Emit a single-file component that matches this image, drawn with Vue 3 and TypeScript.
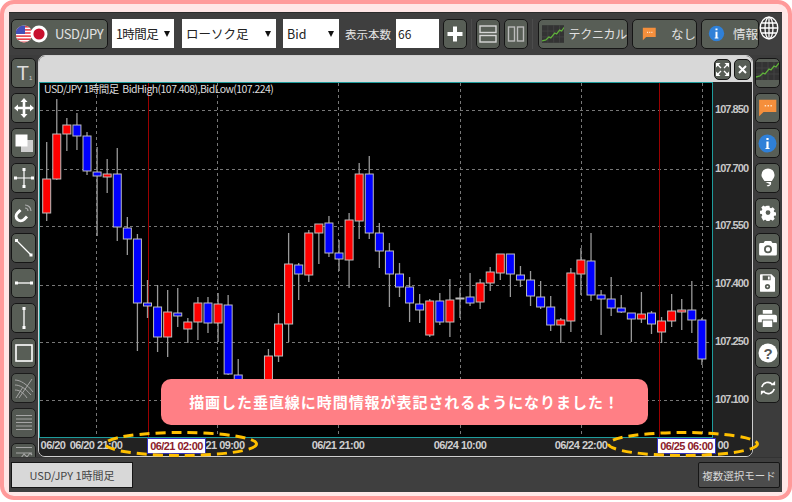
<script setup lang="ts">
type Candle = [number, number, number, number, 'r' | 'b']
// body top, body bottom, wick top, wick bottom, colour
const raw: Candle[] = [
  [179,213,142,221,'r'],[134,179,99,180,'r'],[125,134,118,151,'r'],[125,136,113,150,'b'],[136,171,132,175,'b'],
  [172,176,147,236,'b'],[174,177,159,193,'r'],[174,227,148,241,'b'],[228,239,217,255,'b'],[239,303,234,351,'b'],
  [303,306,280,318,'b'],[307,337,285,352,'b'],[312,337,290,357,'r'],[313,316,288,327,'b'],[322,329,318,343,'r'],
  [303,322,297,340,'r'],[303,323,297,333,'b'],[304,323,293,342,'r'],[305,374,295,375,'b'],[375,395,359,395,'b'],
  [395,396,390,396,'b'],[395,396,390,396,'r'],[356,396,349,396,'r'],[324,356,313,362,'r'],[264,324,233,342,'r'],
  [265,274,263,300,'b'],[233,275,230,282,'r'],[224,233,224,264,'r'],[223,253,216,257,'b'],[253,259,240,271,'b'],
  [220,260,213,288,'r'],[174,221,163,239,'r'],[174,233,156,239,'b'],[233,251,223,268,'b'],[251,274,243,307,'b'],
  [274,287,263,297,'b'],[287,303,277,322,'b'],[304,310,294,323,'b'],[301,335,299,337,'r'],[301,322,293,325,'b'],
  [300,322,279,337,'r'],[298,299,288,318,'r'],[297,303,273,306,'b'],[283,302,279,309,'r'],[272,283,267,291,'r'],
  [254,273,254,280,'r'],[254,274,254,297,'b'],[275,280,266,287,'b'],[280,296,271,306,'b'],[297,307,281,309,'b'],
  [307,325,296,331,'b'],[320,325,318,343,'r'],[273,321,268,332,'r'],[260,274,248,295,'r'],[261,295,233,301,'b'],
  [295,299,290,335,'b'],[299,308,277,316,'b'],[308,312,295,313,'b'],[313,319,313,342,'b'],[314,319,292,323,'r'],
  [313,324,311,334,'b'],[321,332,317,343,'r'],[311,321,294,327,'r'],[310,312,299,330,'r'],[310,320,281,333,'b'],
  [320,359,318,365,'b'],
]
const candles = raw.map((c, i) => ({
  x: 46.7 + i * 10.08,
  top: c[0],
  bottom: c[1],
  wickTop: c[2],
  wickBottom: c[3],
  fill: c[4] === 'r' ? '#ff0000' : '#0000ff',
}))
const gridY = [110.5, 169.5, 226.5, 285.5, 342.5, 400.5]
const gridX = [96.5, 217.5, 338.5, 460.5, 581.5, 702.5]
const redX = [148.5, 659.5]
const prices = [
  { t: '107.850', y: 110 }, { t: '107.700', y: 169 }, { t: '107.550', y: 226 },
  { t: '107.400', y: 284 }, { t: '107.250', y: 342 }, { t: '107.100', y: 400 },
]
const times = [
  { t: '06/20', x: 53 }, { t: '06/20 21:00', x: 96 }, { t: '21 09:00', x: 225 },
  { t: '06/21 21:00', x: 338 }, { t: '06/24 10:00', x: 460 }, { t: '06/24 22:00', x: 581 }, { t: '00', x: 723 },
]
const flagStripes = [0, 1, 2, 3, 4, 5]
</script>

<template>
  <div class="frame">
    <div class="app">
      <header class="toolbar">
        <button class="btn pair">
          <svg width="32" height="22" viewBox="0 0 32 22">
            <defs><clipPath id="usc"><circle cx="8" cy="11" r="8.5" /></clipPath></defs>
            <g clip-path="url(#usc)">
              <rect x="-1" y="0" width="19" height="22" fill="#fff" />
              <rect v-for="s in flagStripes" :key="s" x="-1" :y="3 + s * 3.1" width="19" height="1.6" fill="#e8404a" />
              <rect x="-1" y="0" width="10" height="11" fill="#4450b8" />
            </g>
            <circle cx="23" cy="11" r="8.5" fill="#fff" />
            <circle cx="23" cy="11" r="5.6" fill="#c8102e" />
          </svg>
          <span class="pair-text">USD/JPY</span>
        </button>
        <div class="select s1"><span>1時間足</span><i class="caret"></i></div>
        <div class="select s2"><span>ローソク足</span><i class="caret"></i></div>
        <div class="select s3"><span>Bid</span><i class="caret"></i></div>
        <span class="count-label">表示本数</span>
        <div class="count">66</div>
        <button class="btn square">
          <svg width="18" height="18" viewBox="0 0 18 18"><path d="M7 1.5h4v5.500h5.500v4H11v5.500H7V11H1.500V7H7z" fill="#fff" /></svg>
        </button>
        <i class="sep"></i>
        <button class="btn square">
          <svg width="18" height="20" viewBox="0 0 18 20" fill="none" stroke="#d6d6d6" stroke-width="1.400"><rect x="1" y="2" width="16" height="6.500" /><rect x="1" y="11.500" width="16" height="6.500" /></svg>
        </button>
        <button class="btn square">
          <svg width="18" height="20" viewBox="0 0 18 20" fill="none" stroke="#bbb" stroke-width="1.400"><rect x="1.500" y="3" width="6" height="14" /><rect x="10.500" y="3" width="6" height="14" /></svg>
        </button>
        <i class="sep"></i>
        <button class="btn tech">
          <svg width="23" height="18" viewBox="0 0 23 18">
            <rect width="23" height="18" fill="#333" />
            <path d="M0 6H23M0 12H23M6 0V18M12 0V18M18 0V18" stroke="#484848" stroke-width=".7" />
            <path d="M0 16l4-1 3-3 2 1 4-5 2 1 3-4 2 1 3-4" fill="none" stroke="#5fb03a" stroke-width="1.300" />
          </svg>
          <span>テクニカル</span>
        </button>
        <button class="btn none">
          <svg width="18" height="18" viewBox="0 0 18 18"><path d="M1 1.500h15.500v11H5L1 16.500z" fill="#f58f3c" /><path d="M6 7h1.300M8.600 7h1.300M11.200 7h1.300" stroke="#ffe4c8" stroke-width="1.300" /></svg>
          <span>なし</span>
        </button>
        <button class="btn info">
          <svg width="21" height="21" viewBox="0 0 21 21"><circle cx="10.500" cy="10.500" r="8.500" fill="#2f80d8" /><path d="M9.400 5h2.200v2h-2.200zM9.400 8.500h2.200V15h1v1H8.500v-1h.9z" fill="#fff" /></svg>
          <span>情報</span>
        </button>
        <svg class="globe" width="20" height="24" viewBox="0 0 20 24" fill="none" stroke="#fff" stroke-width="1.300">
          <ellipse cx="10" cy="12" rx="8.800" ry="10.800" fill="#3a3a3a" />
          <ellipse cx="10" cy="12" rx="4" ry="10.800" />
          <path d="M10 1.200V22.800M1.200 12H18.800M2.300 7H17.700M2.300 17H17.700" />
        </svg>
      </header>

      <div class="middle">
        <aside class="tools">
          <button class="btn tool"><span class="t-big">T</span><span class="t-sub">1</span></button>
          <button class="btn tool">
            <svg width="20" height="20" viewBox="0 0 20 20"><path d="M10 0l3.500 4H11.300v4.700H16V6.500L20 10l-4 3.500V11.300H11.300V16h2.200L10 20l-3.500-4h2.200V11.300H4v2.200L0 10l4-3.500v2.200h4.700V4H6.500z" fill="#fff" /></svg>
          </button>
          <button class="btn tool">
            <svg width="20" height="20" viewBox="0 0 20 20"><rect x="7" y="7" width="12" height="12" fill="#cfcfcf" /><rect x="1.500" y="1.500" width="12" height="12" fill="#fff" /></svg>
          </button>
          <button class="btn tool">
            <svg width="20" height="20" viewBox="0 0 20 20"><path d="M10 1V19M1 10H19" stroke="#fff" stroke-width="1.200" /><path d="M8.500 0h3v3h-3zM8.500 17h3v3h-3zM0 8.500h3v3H0zM17 8.500h3v3h-3z" fill="#fff" /></svg>
          </button>
          <button class="btn tool">
            <svg width="20" height="20" viewBox="0 0 20 20" fill="none">
              <path d="M7 6l-3 3a4.500 4.500 0 0 0 6.500 6.500l3-3" stroke="#fff" stroke-width="3" transform="translate(-.5 1)" />
              <path d="M11 2a6 6 0 0 1 6 6M11 5a3 3 0 0 1 3 3" stroke="#aaa" stroke-width="1.200" />
            </svg>
          </button>
          <button class="btn tool">
            <svg width="20" height="20" viewBox="0 0 20 20"><path d="M3 3L17 17" stroke="#fff" stroke-width="1.300" /><path d="M1 1h3v3H1zM15.500 15.500h3v3h-3z" fill="#fff" /></svg>
          </button>
          <button class="btn tool">
            <svg width="20" height="20" viewBox="0 0 20 20"><path d="M2 10H18" stroke="#fff" stroke-width="1.300" /><path d="M1 8.500h3v3H1zM16 8.500h3v3h-3z" fill="#fff" /></svg>
          </button>
          <button class="btn tool">
            <svg width="20" height="24" viewBox="0 0 20 24"><path d="M10 2V22" stroke="#fff" stroke-width="1.300" /><path d="M8.500 1h3v3h-3zM8.500 20h3v3h-3z" fill="#fff" /></svg>
          </button>
          <button class="btn tool">
            <svg width="18" height="18" viewBox="0 0 18 18" fill="none"><rect x="1" y="1" width="16" height="16" stroke="#fff" stroke-width="1.600" /></svg>
          </button>
          <button class="btn tool dim">
            <svg width="20" height="22" viewBox="0 0 20 22" fill="none" stroke="#b8b8b8" stroke-width="1"><path d="M1 3c5 0 12 4 18 12M1 8c5 0 10 3 16 10M1 13c4 0 8 2 12 8M5 21L18 2M2 21L9 10" /></svg>
          </button>
          <button class="btn tool dim">
            <svg width="20" height="20" viewBox="0 0 20 20"><path d="M2 2.500H18M2 6H18M2 9.500H18M2 13H18M2 16.500H18" stroke="#b8b8b8" stroke-width="1.100" /></svg>
          </button>
          <button class="btn tool dim top">
            <svg width="20" height="14" viewBox="0 0 20 14" fill="none" stroke="#b8b8b8" stroke-width="1.100"><path d="M2 1.500H18M2 7H18M2 12H7l3-4 3 3 3-4 2 2" /></svg>
          </button>
        </aside>

        <section class="window">
          <div class="titlebar">
            <button class="btn mini">
              <svg width="13" height="13" viewBox="0 0 13 13"><path d="M0 0h4.500L0 4.500zM13 0v4.500L8.500 0zM0 13V8.500L4.500 13zM13 13H8.500L13 8.500z" fill="#fff" /><path d="M2 2l3 3M11 2L8 5M2 11l3-3M11 11L8 8" stroke="#fff" stroke-width="1.300" /></svg>
            </button>
            <button class="btn mini">
              <svg width="9" height="9" viewBox="0 0 9 9"><path d="M1 1L8 8M8 1L1 8" stroke="#fff" stroke-width="2" /></svg>
            </button>
          </div>
          <div class="chart-row">
            <div class="plot">
              <svg class="plot-svg" width="672" height="354" viewBox="40 83 672 354">
                <g stroke="#777" stroke-width="1" stroke-dasharray="3 3">
                  <line v-for="y in gridY" :key="'h' + y" x1="40" x2="712" :y1="y" :y2="y" />
                  <line v-for="x in gridX" :key="'v' + x" :x1="x" :x2="x" y1="83" y2="437" />
                </g>
                <line v-for="x in redX" :key="'r' + x" :x1="x" :x2="x" y1="83" y2="437" stroke="#9a0000" stroke-width="1" />
                <g v-for="(c, i) in candles" :key="i">
                  <line :x1="c.x" :x2="c.x" :y1="c.wickTop" :y2="c.wickBottom" stroke="#999" stroke-width="1.300" />
                  <rect :x="c.x - 4" :y="c.top" width="8" :height="c.bottom - c.top" :fill="c.fill" stroke="#bdbdbd" stroke-width="1" />
                </g>
              </svg>
              <div class="chart-title">USD/JPY 1時間足&nbsp; BidHigh(107.408),BidLow(107.224)</div>
            </div>
            <div class="price-axis">
              <span v-for="p in prices" :key="p.t" class="price" :style="{ top: p.y - 83 + 'px' }">{{ p.t }}</span>
            </div>
          </div>
          <div class="time-axis">
            <span v-for="t in times" :key="t.t" class="time" :style="{ left: t.x - 39 + 'px' }">{{ t.t }}</span>
            <span class="stamp s-left">06/21 02:00</span>
            <span class="stamp s-right">06/25 06:00</span>
          </div>
        </section>

        <aside class="tools right">
          <button class="btn tool">
            <svg width="23" height="22" viewBox="0 0 23 22">
              <rect width="23" height="18" fill="#333" />
              <path d="M0 6H23M0 12H23M6 0V18M12 0V18M18 0V18" stroke="#484848" stroke-width=".7" />
              <path d="M0 15l4-1 3-3 2 1 4-5 2 1 3-4 2 1 3-4" fill="none" stroke="#5fb03a" stroke-width="1.300" />
            </svg>
          </button>
          <button class="btn tool">
            <svg width="20" height="20" viewBox="0 0 18 18"><path d="M1 1.500h15.500v11H5L1 16.500z" fill="#f58f3c" /><path d="M6 7h1.300M8.600 7h1.300M11.200 7h1.300" stroke="#ffe4c8" stroke-width="1.300" /></svg>
          </button>
          <button class="btn tool">
            <svg width="21" height="21" viewBox="0 0 21 21"><circle cx="10.500" cy="10.500" r="9" fill="#2f80d8" /><path d="M9.400 5h2.200v2h-2.200zM9.400 8.500h2.200V15h1v1H8.500v-1h.9z" fill="#fff" /></svg>
          </button>
          <button class="btn tool">
            <svg width="14" height="22" viewBox="0 0 16 22"><path d="M8 0a7.500 7.500 0 0 1 7.500 7.500c0 3-2 4.500-3 7H4c-1-2.500-3.500-4-3.500-7A7.500 7.500 0 0 1 8 0z" fill="#fff" /><path d="M5 15.500h6.500v2.500c-1 2-4 3.500-5 1.500l4-1.500" fill="#fff" /></svg>
          </button>
          <button class="btn tool">
            <svg width="16" height="16" viewBox="-1 -1 20 20">
              <path fill="#fff" fill-rule="evenodd" d="M7.200 0h3.600l.5 2.400 1.500.7 2.100-1.300 2.500 2.500-1.300 2.100.7 1.500 2.200.5v3.600l-2.300.5-.6 1.500 1.300 2.100-2.500 2.500-2.100-1.300-1.500.6-.5 2.400H7.200l-.5-2.400-1.500-.6-2.100 1.300L.6 14l1.300-2.100-.6-1.500L-1 9.900V6.300l2.300-.5.600-1.500L.6 2.200 3.100-.3l2.100 1.300 1.500-.6zM9 5.500a3 3 0 1 0 0 6 3 3 0 0 0 0-6z" />
            </svg>
          </button>
          <button class="btn tool">
            <svg width="18" height="16" viewBox="0 0 20 18"><path fill="#fff" fill-rule="evenodd" d="M1.500 3.500H5L6.500 1h7L15 3.500h3.500A1.500 1.500 0 0 1 20 5v11a1.500 1.500 0 0 1-1.500 1.500h-17A1.500 1.500 0 0 1 0 16V5a1.500 1.500 0 0 1 1.500-1.500zM10 6a4.500 4.500 0 1 0 0 9 4.500 4.500 0 0 0 0-9zm0 2a2.500 2.500 0 1 1 0 5 2.500 2.500 0 0 1 0-5z" /></svg>
          </button>
          <button class="btn tool">
            <svg width="15" height="18" viewBox="0 0 17 20"><path fill="#fff" fill-rule="evenodd" d="M1 0h12l4 4v15a1 1 0 0 1-1 1H1a1 1 0 0 1-1-1V1a1 1 0 0 1 1-1zM3 1.500V7h9V1.500zM9 2.500h2v3.500H9zM8.500 11a3 3 0 1 0 0 6 3 3 0 0 0 0-6z" /><circle cx="8.500" cy="14" r="1" fill="#fff" /></svg>
          </button>
          <button class="btn tool">
            <svg width="19" height="17" viewBox="0 0 20 18"><path fill="#fff" d="M5 0h10v4H5zM2 5h16a2 2 0 0 1 2 2v6h-4v-3H4v3H0V7a2 2 0 0 1 2-2zM5 11h10v7H5z" /></svg>
          </button>
          <button class="btn tool">
            <svg width="20" height="20" viewBox="0 0 20 20"><circle cx="10" cy="10" r="9.500" fill="#fff" /><text x="10" y="15.500" text-anchor="middle" class="q">?</text></svg>
          </button>
          <button class="btn tool">
            <svg width="18" height="16" viewBox="0 0 20 18" fill="none" stroke="#fff" stroke-width="1.800"><path d="M3 8a7 7 0 0 1 12-3" /><path d="M17 10a7 7 0 0 1-12 3" /><path d="M13 6h5V1z" fill="#fff" stroke="none" /><path d="M7 12H2v5z" fill="#fff" stroke="none" /></svg>
          </button>
        </aside>
      </div>

      <footer class="footer">
        <button class="tab">USD/JPY 1時間足</button>
        <button class="multi">複数選択モード</button>
      </footer>

      <svg class="ring ring-left" width="156" height="28" viewBox="0 0 156 28" fill="none"><ellipse cx="78" cy="14" rx="75.500" ry="11.500" stroke="#ffc000" stroke-width="3" stroke-dasharray="10 6" /></svg>
      <svg class="ring ring-right" width="154" height="28" viewBox="0 0 154 28" fill="none"><ellipse cx="77" cy="14" rx="74.500" ry="11.500" stroke="#ffc000" stroke-width="3" stroke-dasharray="10 6" /></svg>
      <div class="banner">描画した垂直線に時間情報が表記されるようになりました！</div>
    </div>
  </div>
</template>

<style>
html, body { margin: 0; background: #fff; }
</style>

<style scoped>
.frame {
  box-sizing: border-box;
  width: 792px;
  height: 500px;
  padding: 8px 5px 4px 5px;
  background: #ffe6e6;
  border: 4px solid #ff9a9a;
  border-radius: 14px;
  font-family: "Noto Sans CJK JP", "Liberation Sans", sans-serif;
}
.app {
  position: relative;
  width: 773px;
  height: 480px;
  background: #3c3c3c;
  display: flex;
  flex-direction: column;
  overflow: hidden;
}
button { font-family: inherit; padding: 0; cursor: default; white-space: nowrap; }
.btn {
  box-sizing: border-box;
  display: flex;
  align-items: center;
  justify-content: center;
  background: #585e56;
  border: 1px solid #161616;
  border-radius: 5px;
  color: #e2e2e2;
  font-size: 13px;
  flex: none;
}
.toolbar {
  height: 43px;
  flex: none;
  display: flex;
  align-items: center;
  padding: 0 0 1px 2px;
  box-sizing: border-box;
  background: #3f3f3f;
  border-top: 1px solid #2c2c2c;
}
.pair { width: 97px; height: 30px; justify-content: flex-start; padding-left: 4px; margin-right: 4px; }
.pair-text { margin-left: 7px; letter-spacing: -.5px; font-size: 13px; }
.select {
  box-sizing: border-box;
  height: 29px;
  background: #fff;
  display: flex;
  align-items: center;
  justify-content: space-between;
  padding: 0 5px 0 4px;
  color: #222;
  font-size: 12.500px;
  flex: none;
  white-space: nowrap;
}
.s1 { width: 62px; margin-right: 8px; letter-spacing: -.6px; padding-right: 4px; }
.s2 { width: 94px; margin-right: 7px; }
.s3 { width: 56px; margin-right: 6px; }
.caret {
  width: 0;
  height: 0;
  border-left: 3px solid transparent;
  border-right: 3px solid transparent;
  border-top: 6px solid #111;
}
.count-label { color: #e4e4e4; font-size: 11.500px; width: 45px; margin-right: 6px; white-space: nowrap; flex: none; }
.count {
  box-sizing: border-box;
  width: 43px;
  height: 29px;
  background: #fff;
  color: #222;
  font-size: 12px;
  line-height: 29px;
  padding-left: 2px;
  margin-right: 4px;
  flex: none;
}
.square { width: 24px; height: 30px; margin-right: 4px; }
.sep { width: 1px; height: 30px; background: #4c4c4c; margin: 0 4px 0 0; flex: none; }
.tech { width: 90px; height: 30px; margin: 0 4px 0 1px; gap: 4px; justify-content: flex-start; padding-left: 3px; font-size: 12px; letter-spacing: -.3px; }
.none { width: 65px; height: 30px; margin-right: 4px; gap: 14px; justify-content: flex-start; padding-left: 9px; font-size: 12.500px; }
.info { width: 58px; height: 30px; gap: 7px; justify-content: flex-start; padding-left: 5px; font-size: 12.500px; }
.globe { margin: 0 0 11px 0; flex: none; }
.middle { flex: none; height: 402px; display: flex; }
.tools {
  width: 29px;
  flex: none;
  box-sizing: border-box;
  height: 402px;
  overflow: hidden;
  padding: 3px 0 0 2px;
  display: flex;
  flex-direction: column;
  gap: 5px;
}
.tools.right { padding-left: 2px; background: #3c3c3c; }
.tool { width: 25px; height: 30px; }
.dim { opacity: .85; }
.top { align-items: flex-start; padding-top: 2px; }
.t-big { color: #ddd; font-size: 20px; font-family: "Liberation Sans", sans-serif; line-height: 1; margin-left: 2px; }
.t-sub { color: #ccc; font-size: 6px; font-family: "Liberation Sans", sans-serif; align-self: flex-end; margin-bottom: 6px; }
.window {
  box-sizing: border-box;
  width: 715px;
  height: 402px;
  flex: none;
  display: flex;
  flex-direction: column;
  background: #222;
  border: 1px solid #cfcfcf;
  border-radius: 7px;
  overflow: hidden;
}
.titlebar {
  height: 26px;
  flex: none;
  background: #d8d8d8;
  display: flex;
  justify-content: flex-end;
  align-items: center;
  gap: 3px;
  padding-right: 1px;
  box-sizing: border-box;
}
.mini { width: 17px; height: 21px; }
.chart-row { display: flex; flex: none; height: 356px; }
.plot {
  position: relative;
  box-sizing: border-box;
  width: 674px;
  height: 356px;
  background: #000;
  border: 1px solid #1e9c9c;
  flex: none;
}
.plot-svg { display: block; }
.chart-title {
  position: absolute;
  left: 4px;
  top: -1px;
  color: #dcdcdc;
  font-size: 10.500px;
  line-height: 13px;
  white-space: nowrap;
  letter-spacing: -.55px;
}
.price-axis { position: relative; flex: 1; background: #222; }
.price {
  position: absolute;
  left: 2px;
  transform: translateY(-50%);
  color: #c8c8c8;
  font-family: "Liberation Sans", sans-serif;
  font-weight: 700;
  font-size: 11px;
  letter-spacing: -.95px;
  line-height: 12px;
}
.time-axis { position: relative; flex: 1; background: #222; overflow: hidden; }
.time {
  position: absolute;
  top: 1px;
  transform: translateX(-50%);
  color: #cfcfcf;
  font-family: "Liberation Sans", sans-serif;
  font-weight: 700;
  font-size: 11px;
  letter-spacing: -.55px;
  line-height: 13px;
  white-space: nowrap;
}
.stamp {
  position: absolute;
  top: 0;
  box-sizing: border-box;
  width: 59px;
  height: 16px;
  background: #fff;
  border: 1px solid #3030c0;
  color: #8c1c2c;
  font-family: "Liberation Sans", sans-serif;
  font-weight: 700;
  font-size: 11px;
  letter-spacing: -.55px;
  line-height: 14px;
  text-align: center;
  white-space: nowrap;
}
.s-left { left: 108px; }
.s-right { left: 618px; }
.footer {
  flex: none;
  height: 35px;
  box-sizing: border-box;
  display: flex;
  justify-content: space-between;
  align-items: center;
  padding: 0 2px 0 2px;
  background: #3f3f3f;
  border-top: 1px solid #333;
}
.tab {
  box-sizing: border-box;
  width: 122px;
  height: 26px;
  background: #d8d8d8;
  border: 1px solid #161616;
  color: #444;
  font-size: 11px;
}
.multi {
  box-sizing: border-box;
  width: 82px;
  height: 26px;
  background: #4c4c4c;
  border: 1px solid #161616;
  border-radius: 2px;
  color: #d8d8d8;
  font-size: 10.500px;
  white-space: nowrap;
}
.ring { position: absolute; top: 418px; }
.ring-left { left: 94px; }
.ring-right { left: 597px; }
.banner {
  position: absolute;
  left: 152px;
  top: 367px;
  width: 487px;
  height: 46px;
  border-radius: 10px;
  background: #ff7f85;
  color: #fff;
  font-weight: 700;
  font-size: 15px;
  letter-spacing: .95px;
  text-align: center;
  line-height: 45px;
  white-space: nowrap;
}
.q { font-family: "Liberation Sans", sans-serif; font-weight: 700; font-size: 15px; fill: #555; }
</style>
